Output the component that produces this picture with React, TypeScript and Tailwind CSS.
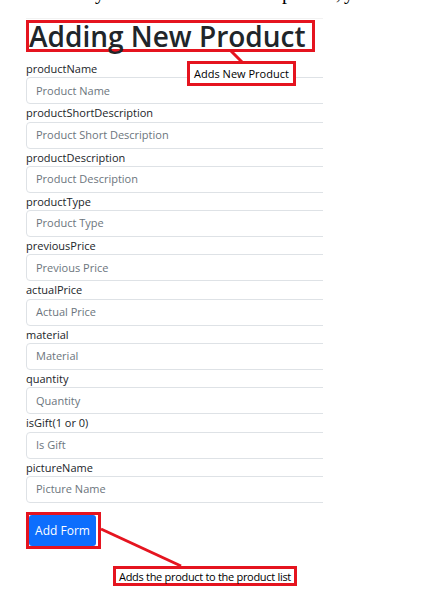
import React from "react";

const fields = [
  { label: "productName", placeholder: "Product Name" },
  { label: "productShortDescription", placeholder: "Product Short Description" },
  { label: "productDescription", placeholder: "Product Description" },
  { label: "productType", placeholder: "Product Type" },
  { label: "previousPrice", placeholder: "Previous Price" },
  { label: "actualPrice", placeholder: "Actual Price" },
  { label: "material", placeholder: "Material" },
  { label: "quantity", placeholder: "Quantity" },
  { label: "isGift(1 or 0)", placeholder: "Is Gift" },
  { label: "pictureName", placeholder: "Picture Name" },
];

const App: React.FC = () => {
  return (
    <div className="relative w-[438px] h-[600px] bg-white overflow-hidden font-['Open_Sans',sans-serif] text-[#212529]">
      {/* clipped line of the document above */}
      <div className="h-[6px] overflow-hidden">
        <div className="flex font-['Liberation_Serif',serif] text-[20px] leading-[23px] mt-[-19px] text-black whitespace-pre">
          <span className="ml-[95px]">y</span>
          <span className="ml-[177px]">p</span>
          <span className="ml-[44px]">,</span>
          <span className="ml-[3px]">y</span>
        </div>
      </div>

      <div className="pl-[26px]">
        <div className="mt-[12px] w-[297px] border-t border-[#f2f2f2]" />

        {/* heading */}
        <div className="mt-[1px] w-[289px] h-[32px] border-[3px] border-[#e5141f]">
          <h1 className="text-[28px] font-semibold leading-[26px] whitespace-nowrap">
            Adding New Product
          </h1>
        </div>

        {/* form */}
        <form className="mt-[8px] w-[297px] overflow-hidden">
          {fields.map((f) => (
            <div key={f.label} className="flex flex-col">
              <label className="text-[11px] leading-[17.3px] h-[17.3px]">{f.label}</label>
              <div className="w-[320px] h-[27px] rounded-[4px] border border-[#dee2e6] flex items-center pl-[9px] text-[11px] text-[#6c757d]">
                {f.placeholder}
              </div>
            </div>
          ))}
        </form>

        <div className="mt-[9px] w-[75px] h-[37px] border-[3px] border-[#e5141f] bg-white">
          <button className="w-[67px] h-[31px] rounded-[3px] bg-[#0d6efd] text-white text-[12px] leading-[31px] text-center">
            Add Form
          </button>
        </div>
      </div>

      {/* annotations */}
      <svg className="absolute left-0 top-0" width="438" height="600">
        <line x1="231" y1="51" x2="243" y2="63" stroke="#e5141f" strokeWidth="3" />
        <line x1="101" y1="529" x2="181" y2="566" stroke="#e5141f" strokeWidth="3" />
      </svg>

      <div className="absolute left-[187px] top-[61px] w-[109px] h-[25px] border-[3px] border-[#e5141f] bg-white flex items-center justify-center text-[11px] leading-none text-black whitespace-nowrap">
        Adds New Product
      </div>

      <div className="absolute left-[113px] top-[566px] w-[184px] h-[20px] border-[3px] border-[#e5141f] bg-white flex items-center justify-center text-[11px] tracking-[-0.3px] leading-none text-black whitespace-nowrap">
        Adds the product to the product list
      </div>
    </div>
  );
};

export default App;
